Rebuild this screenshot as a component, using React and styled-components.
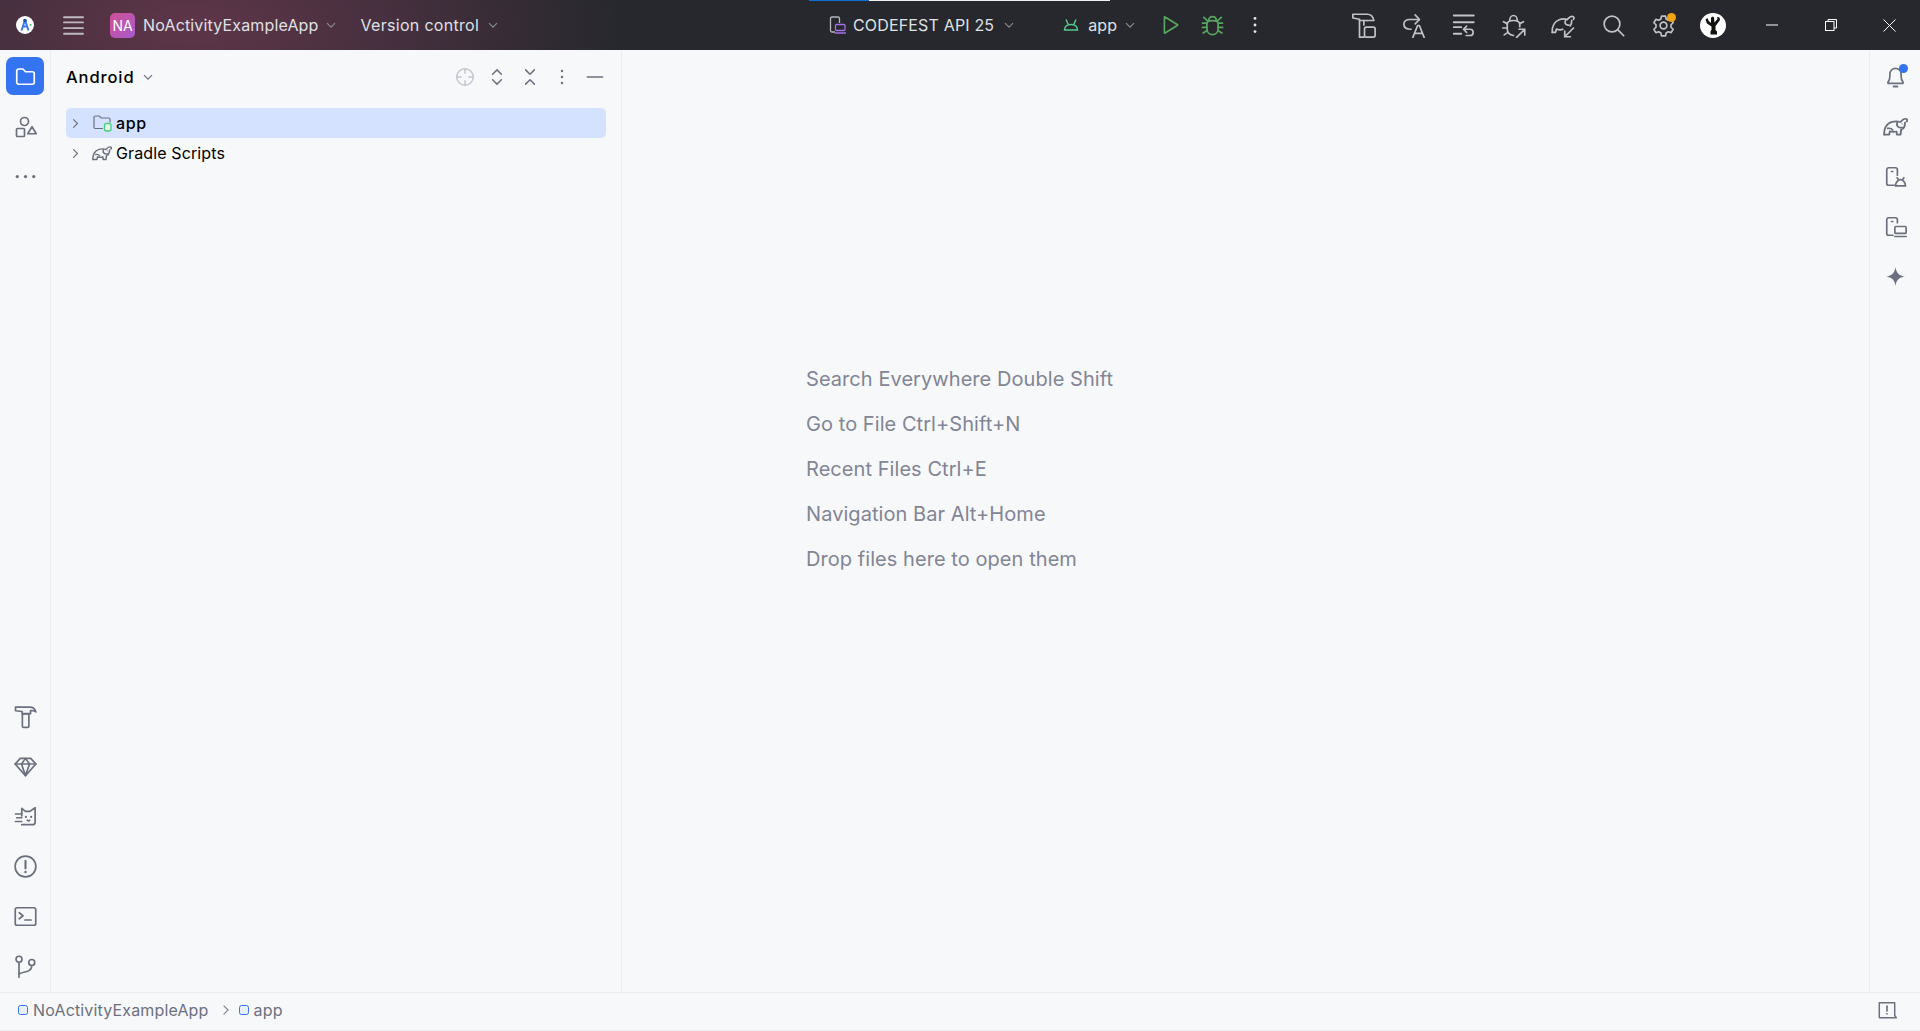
import React from "react";
import styled, { createGlobalStyle } from "styled-components";

const Global = createGlobalStyle`
  html, body { margin: 0; padding: 0; height: 100%; background: #f7f8fa; }
  body { font-family: "Inter", "Liberation Sans", sans-serif; }
  #root { height: 100%; }
`;

const Screen = styled.div`
  display: flex;
  flex-direction: column;
  width: 100%;
  height: 1031px;
  overflow: hidden;
  background: #f7f8fa;
  color: #000;
`;

const TitleBar = styled.header`
  position: relative;
  flex: 0 0 50px;
  display: flex;
  align-items: center;
  background:
    radial-gradient(ellipse 430px 190px at 190px 25px, #5f3549 0%, #47303f 45%, #27282e 100%);
`;

const Progress = styled.div`
  position: absolute;
  top: 0;
  left: 809px;
  width: 301px;
  height: 1px;
  background: linear-gradient(90deg, #0a6fd6 0 60px, #f0f0f0 60px);
`;

const TitleLeft = styled.div`
  flex: 0 0 829px;
  display: flex;
  align-items: center;
`;

const TitleSlot = styled.div`
  flex: 0 0 ${(p) => p.$w || 50}px;
  height: 50px;
  display: flex;
  align-items: center;
  justify-content: center;
`;

const ProjectBadge = styled.div`
  width: 25px;
  height: 25px;
  margin-left: 12px;
  margin-right: 8px;
  border-radius: 5px;
  background: linear-gradient(135deg, #d24f95, #a65bce);
  color: #fff;
  display: flex;
  align-items: center;
  justify-content: center;
  font-size: 14px;
`;

const TitleText = styled.span`
  color: #dfe1e5;
  font-size: 16px;
  letter-spacing: ${(p) => p.$ls ?? 0.16}px;
  line-height: 20px;
  white-space: nowrap;
  margin-left: ${(p) => p.$ml || 0}px;
`;

const Drop = styled.svg`
  flex: none;
  width: ${(p) => p.$s || 12}px;
  height: ${(p) => p.$s || 12}px;
  margin-left: ${(p) => p.$ml ?? 6}px;
  fill: none;
  stroke: ${(p) => p.$c || "#868a91"};
  stroke-width: 1.2;
`;

const VersionGroup = styled.div`
  display: flex;
  align-items: center;
  margin-left: 24px;
`;

const TitleCenter = styled.div`
  display: flex;
  align-items: center;
  flex: 0 0 509px;
`;

const RunTarget = styled.div`
  display: flex;
  align-items: center;
  margin-left: ${(p) => p.$ml || 0}px;
`;

const RightTools = styled.div`
  display: flex;
  align-items: center;
`;

const WindowControls = styled.div`
  display: flex;
  margin-left: 4px;
`;

const WinButton = styled.div`
  width: 59px;
  height: 50px;
  display: flex;
  align-items: center;
  justify-content: center;
`;

const Workspace = styled.div`
  flex: 1;
  display: flex;
  min-height: 0;
`;

const Stripe = styled.aside`
  flex: 0 0 50px;
  display: flex;
  flex-direction: column;
  justify-content: space-between;
  align-items: center;
  padding: 7px 0 0;
  box-sizing: content-box;
  border-${(p) => p.$side}: 1px solid #ebecf0;
`;

const StripeGroup = styled.div`
  display: flex;
  flex-direction: column;
  align-items: center;
`;

const StripeButton = styled.div`
  width: 38px;
  height: 38px;
  margin: 0 0 12px;
  border-radius: 7px;
  display: flex;
  align-items: center;
  justify-content: center;
  background: ${(p) => (p.$active ? "#3574f0" : "transparent")};
  &:last-child {
    margin-bottom: 7px;
  }
`;

const ToolPanel = styled.section`
  flex: 0 0 570px;
  display: flex;
  flex-direction: column;
  border-right: 1px solid #ebecf0;
  box-sizing: content-box;
`;

const PanelHeader = styled.div`
  height: 53px;
  display: flex;
  align-items: center;
  padding: 0 0 0 15px;
`;

const PanelTitle = styled.span`
  font-size: 16.5px;
  font-weight: 500;
  letter-spacing: 0.9px;
  color: #000;
`;

const PanelTools = styled.div`
  margin-left: auto;
  display: flex;
  margin-right: 10px;
`;

const PanelTool = styled.div`
  width: 32.5px;
  height: 30px;
  display: flex;
  align-items: center;
  justify-content: center;
`;

const Tree = styled.div`
  padding: 5px 15px 0 15px;
  display: flex;
  flex-direction: column;
`;

const TreeRow = styled.div`
  height: 30px;
  display: flex;
  align-items: center;
  padding-left: 3px;
  border-radius: 5px;
  background: ${(p) => (p.$selected ? "#d4e2ff" : "transparent")};
`;

const TreeGap = styled.span`
  flex: none;
  width: 10px;
`;

const TreeLabel = styled.span`
  font-size: 16px;
  margin-left: 4px;
  letter-spacing: ${(p) => (p.$selected ? 0.6 : 0.12)}px;
  font-weight: ${(p) => (p.$selected ? 500 : 400)};
  color: #000;
`;

const Editor = styled.main`
  flex: 1;
  display: flex;
  flex-direction: column;
  justify-content: flex-start;
  gap: 15px;
  padding: 314px 0 0 184px;
`;

const Hint = styled.div`
  font-size: 20px;
  letter-spacing: 0.06px;
  line-height: 30px;
  color: #818594;
`;

const StatusBar = styled.footer`
  flex: 0 0 39px;
  display: flex;
  align-items: center;
  padding: 0 18px 3px 18px;
  border-top: 1px solid #ebecf0;
  border-bottom: 1px solid #eceef1;
  box-sizing: border-box;
`;

const Crumb = styled.span`
  font-size: 16px;
  letter-spacing: 0.16px;
  color: #6c707e;
`;

const ModuleBox = styled.span`
  width: 10px;
  height: 10px;
  margin-left: ${(p) => p.$ml || 0}px;
  margin-right: 5px;
  box-sizing: border-box;
  border: 1.4px solid #3574f0;
  background: #e7effd;
  border-radius: 2.5px;
`;

const CrumbSep = styled.span`
  display: flex;
  margin-left: 10px;
`;

const StatusEnd = styled.div`
  margin-left: auto;
  display: flex;
  margin-right: 4px;
`;

const G = styled.svg`
  flex: none;
  display: block;
  width: ${(p) => p.$s || 25}px;
  height: ${(p) => p.$s || 25}px;
  fill: none;
  stroke: ${(p) => p.$c || "#6c707e"};
  stroke-width: ${(p) => p.$w || 1.35};
  stroke-linecap: round;
  stroke-linejoin: round;
`;

const I = ({ children, s, c, w }) => (
  <G viewBox="0 0 20 20" $s={s} $c={c} $w={w}>
    {children}
  </G>
);

const Chev = ({ c, ml, s }) => (
  <Drop viewBox="0 0 12 12" $c={c} $ml={ml} $s={s}>
    <path d="M2 4.2l4 4 4-4" />
  </Drop>
);

const Elephant = ({ eye = "#6c707e" }) => (
  <g transform="translate(-1.200 0) scale(1.120 1)">
    <path d="M2 16.500C1.500 12 3.500 7.500 7.500 6.300 10 5.600 12 5.800 13.300 6.500 14.500 5.800 15 3.800 17 3.800 18.400 3.800 18.800 5.200 18 6" />
    <path d="M11.300 6.500c-1 2.800.6 5 3.700 4.300" />
    <path d="M16.800 6.800c0 2.700-.8 5.200-2.800 5.700l-.4 4h-2.600l-.2-2.500c-1.800.5-3.300.5-4.800-.2l-.5 2.700H2" />
    <path d="M4.500 11.500c1.500-.3 2.700.2 3.500 1.300" />
    <circle cx="14.700" cy="7.800" r=".5" fill={eye} stroke="none" />
  </g>
);

const tools = {
  hammerBox: (
    <>
      <path d="M1.500 1h11.500c2.800 0 4.700 1.800 5.300 5h-5.500M1.500 1v3l5.300 1v14.300h3.500" />
      <path d="M10.300 6v3.500" />
      <path d="M6.800 6h6" />
      <rect x="10.800" y="11.300" width="8.500" height="8" rx="1.500" />
    </>
  ),
  redoA: (
    <>
      <path d="M11.300 1.500l3.500 3.700-3.500 3.500" />
      <path d="M14.500 5.200H7C4.300 5.200 2.300 6.500 2.300 9S4.500 13 8 13" />
      <path d="M9.500 19.500l3.800-9.500h1.400l3.800 9.500M11 16.300h6" />
    </>
  ),
  lines: (
    <>
      <path d="M2.200 2h16M2.200 7.400h16M2.200 11.300h6M2.200 16.600h6" strokeWidth="1.500" />
      <path d="M10.200 13h5a2.500 2.500 0 0 1 0 5h-3M12.500 10.500L10 13l2.500 2.500" />
    </>
  ),
  bugArrow: (
    <>
      <path d="M7 6C7 3.800 8.300 2 10 2s3 1.800 3 4" />
      <path d="M5 9c0-2 2-3 5-3s5 1 5 3v2" />
      <path d="M5 9v3.500C5 15.500 7 17.500 10 18" />
      <path d="M5 8.500L2 7M5 12H1.500M5.500 15.500l-3 2M15 8.500l3-1.500" />
      <path d="M12.500 19.500L19 13M14.500 13H19v4.500" />
    </>
  ),
  elephantArrows: (
    <>
      <path d="M1 15.500C.7 10.500 3 6.500 7 5.200 9.500 4.400 11.500 4.600 13 5.300 14 4.200 15 2.500 17 2.700 18.400 2.900 18.800 4.300 18 5" />
      <path d="M11.500 6c-.8 2.300.5 4 2.800 3.700" />
      <path d="M16.600 5.800c0 2-.3 3.500-1.300 4.600M1 15.500h2.500l.9-2.600c1.800.7 3.400.7 5 .2" />
      <path d="M11 19l7-7M11 14.500V19h4.500" />
    </>
  ),
  search: (
    <>
      <circle cx="8.800" cy="8.800" r="6.300" />
      <path d="M13.500 13.500l4.700 4.700" />
    </>
  ),
  gear: (
    <>
      <path d="M8.400 2.500h3.200l.5 2.300 1.700 1 2.300-.7 1.600 2.700-1.700 1.600v2l1.700 1.600-1.600 2.700-2.300-.7-1.700 1-.5 2.300H8.400l-.5-2.300-1.700-1-2.300.7-1.600-2.700 1.700-1.600v-2L2.300 7.800l1.600-2.700 2.300.7 1.700-1z" />
      <circle cx="10" cy="10" r="2.700" />
    </>
  ),
};

const leftTop = [
  {
    active: true,
    c: "#fff",
    g: (
      <path d="M3 5.500A1.500 1.500 0 0 1 4.500 4H8l2 2.200h5.500A1.500 1.500 0 0 1 17 7.700v7A1.500 1.500 0 0 1 15.500 16.200h-11A1.500 1.500 0 0 1 3 14.700z" />
    ),
  },
  {
    g: (
      <>
        <circle cx="9.200" cy="6" r="3.200" />
        <rect x="2.800" y="11.600" width="6.400" height="6.400" rx=".8" />
        <path d="M15.200 10.200l3.400 5.600h-6.800z" />
      </>
    ),
  },
  {
    g: (
      <g fill="#6c707e" stroke="none">
        <circle cx="3.400" cy="10" r="1.300" />
        <circle cx="10" cy="10" r="1.300" />
        <circle cx="16.600" cy="10" r="1.300" />
      </g>
    ),
  },
];

const leftBottom = [
  <>
    <path d="M2 2.500h11.500c2.300 0 4 1.200 4.800 3.800-1.400-.8-2.800-1.100-4.300-1.100v2.500H7.300V6L2 5.400z" />
    <path d="M7.500 8h5.200v9.700a1 1 0 0 1-1 1H8.500a1 1 0 0 1-1-1z" />
  </>,
  <>
    <path d="M5.800 3.500h8.400L18.300 8 10 17.300 1.700 8z" />
    <path d="M1.700 8h16.600M6.800 8L10 17.300 13.200 8M6.800 8l3.200-4.500L13.200 8" />
  </>,
  <>
    <path d="M7 9.500V3.500l3 2.400h3.500L17.700 3v11.500a2 2 0 0 1-2 2H7" />
    <path d="M2 8h5M3 11h4M2 14h5" />
    <g fill="#6c707e" stroke="none">
      <circle cx="10.300" cy="10.300" r=".9" />
      <circle cx="14.500" cy="10.300" r=".9" />
    </g>
    <path d="M11.400 13c.7.600 1.400.6 2 0" />
  </>,
  <>
    <circle cx="10" cy="10" r="8.300" />
    <path d="M10 5.500v6" strokeWidth="1.700" />
    <circle cx="10" cy="14.300" r="1" fill="#6c707e" stroke="none" />
  </>,
  <>
    <rect x="1.800" y="3" width="16.400" height="14" rx="1.500" />
    <path d="M5 7l3 2.400L5 11.800M9.500 12.800h5" />
  </>,
  <>
    <circle cx="4.800" cy="4.200" r="2.400" />
    <circle cx="15" cy="6.800" r="2.400" />
    <path d="M4.800 6.600v12M15 9.200c0 3-2 4.300-4 4.800-2.500.6-4.500 1-6.200 2" />
  </>,
];

const rightTools = [
  <>
    <path d="M4 14.500c1-1.200 1.500-2.500 1.500-4.500V8a4.500 4.500 0 0 1 9 0v2c0 2 .5 3.300 1.500 4.500.3.500 0 1-.5 1h-11c-.5 0-.8-.5-.5-1z" />
    <path d="M8.500 18h3" strokeWidth="1.600" />
  </>,
  <Elephant />,
  <>
    <path d="M9 17H4.500a1.500 1.500 0 0 1-1.500-1.500v-11A1.500 1.500 0 0 1 4.500 3H10a1.500 1.500 0 0 1 1.500 1.500V9" />
    <path d="M6.800 6h1" />
    <path d="M10 17.500c0-3 2.300-5 4-5s4 2 4 5zM11.300 11l1.300 1.800M16.700 11l-1.300 1.800" />
  </>,
  <>
    <path d="M8 17H4.500a1.500 1.500 0 0 1-1.500-1.500v-11A1.500 1.500 0 0 1 4.500 3H10a1.500 1.500 0 0 1 1.500 1.500V7" />
    <path d="M6.800 6h1" />
    <rect x="9.500" y="10" width="9" height="5.500" rx=".8" />
    <path d="M9.500 18h9" />
  </>,
  <path
    d="M10 2.500c.7 4.700 2.800 6.800 7.500 7.500-4.700.7-6.800 2.800-7.500 7.500-.7-4.700-2.800-6.800-7.500-7.500 4.700-.7 6.800-2.800 7.500-7.500z"
    fill="#6c707e"
    stroke="none"
  />,
];

const Dot = styled.span`
  position: absolute;
  width: ${(p) => p.$s}px;
  height: ${(p) => p.$s}px;
  border-radius: 50%;
  background: ${(p) => p.$c};
  top: ${(p) => p.$t}px;
  right: ${(p) => p.$r}px;
`;

const Badged = styled.span`
  position: relative;
  display: block;
  width: 25px;
  height: 25px;
`;

const hints = [
  "Search Everywhere Double Shift",
  "Go to File Ctrl+Shift+N",
  "Recent Files Ctrl+E",
  "Navigation Bar Alt+Home",
  "Drop files here to open them",
];

const TITLE_ICON = "#bfc2c8";

export default function App() {
  return (
    <Screen>
      <Global />
      <TitleBar>
        <Progress />
        <TitleLeft>
          <TitleSlot $w={49}>
            <svg width="18" height="18" viewBox="0 0 18 18">
              <circle cx="9" cy="9" r="9" fill="#fff" />
              <path d="M9 4L5.500 14.500M9 4l3.500 10.500M6.500 10.500h5" stroke="#3d7bea" strokeWidth="2" fill="none" />
              <circle cx="9" cy="4.500" r="1.800" fill="#1f4fa8" />
              <circle cx="14.500" cy="9" r="1" fill="#4fc06f" />
            </svg>
          </TitleSlot>
          <TitleSlot $w={49}>
            <I c="#bdbabf" s={25} w={1.5}>
              <path d="M2.400 3.400h15.200M2.400 7.500h15.200M2.400 12.100h15.200M2.400 16.600h15.200" />
            </I>
          </TitleSlot>
          <ProjectBadge>NA</ProjectBadge>
          <TitleText>NoActivityExampleApp</TitleText>
          <Chev />
          <VersionGroup>
            <TitleText $ls={0.3}>Version control</TitleText>
            <Chev ml={8} />
          </VersionGroup>
        </TitleLeft>
        <TitleCenter>
          <svg width="18" height="20" viewBox="0 0 18 20" fill="none">
            <path d="M6 17H3a1.500 1.500 0 0 1-1.500-1.500v-12A1.500 1.500 0 0 1 3 2h6a1.500 1.500 0 0 1 1.500 1.500V8" stroke="#b4b8bf" strokeWidth="1.300" />
            <rect x="6.500" y="9.500" width="9.500" height="6" rx="1" stroke="#a571e6" strokeWidth="1.300" />
            <path d="M5.500 18h11.500" stroke="#a571e6" strokeWidth="1.500" />
          </svg>
          <TitleText $ml={6}>CODEFEST API 25</TitleText>
          <Chev ml={9} />
          <RunTarget $ml={48}>
            <svg width="16" height="14" viewBox="0 0 16 14" fill="none">
              <path d="M1.500 12c0-3.500 2.800-5.500 6.500-5.500s6.500 2 6.500 5.500zM3 1.500l2.500 5.500M13 1.500L10.500 7" stroke="#57c98a" strokeWidth="1.500" />
            </svg>
            <TitleText $ml={9}>app</TitleText>
            <Chev ml={7} />
          </RunTarget>
          <RunTarget $ml={23}>
            <I c="#57a65e" s={24} w={1.4}>
              <path d="M4.500 3.500v13a.3.300 0 0 0 .5.200L15.500 10.200a.3.300 0 0 0 0-.4L5 3.300a.3.300 0 0 0-.5.200z" />
            </I>
          </RunTarget>
          <RunTarget $ml={17}>
            <I c="#57a65e" s={25} w={1.4}>
              <path d="M7 6c0-2 1.300-3.200 3-3.200S13 4 13 6M5.500 8.500C5.500 6.500 7.500 6 10 6s4.500.5 4.500 2.500v4c0 2.800-2 4.700-4.500 4.700s-4.500-1.900-4.500-4.700z" />
              <path d="M2 8h3.500M14.500 8H18M2 11.500h3.500M14.500 11.500H18M2.500 16l3.300-2M17.500 16l-3.300-2M3 3.500l3.300 3M17 3.500l-3.300 3" />
            </I>
          </RunTarget>
          <RunTarget $ml={18}>
            <I c="#e4e6ea" s={24}>
              <g fill="#e4e6ea" stroke="none">
                <circle cx="10" cy="4.500" r="1.200" />
                <circle cx="10" cy="10" r="1.200" />
                <circle cx="10" cy="15.500" r="1.200" />
              </g>
            </I>
          </RunTarget>
        </TitleCenter>
        <RightTools>
          <TitleSlot><I c={TITLE_ICON}>{tools.hammerBox}</I></TitleSlot>
          <TitleSlot><I c={TITLE_ICON}>{tools.redoA}</I></TitleSlot>
          <TitleSlot><I c={TITLE_ICON}>{tools.lines}</I></TitleSlot>
          <TitleSlot><I c={TITLE_ICON}>{tools.bugArrow}</I></TitleSlot>
          <TitleSlot><I c={TITLE_ICON}>{tools.elephantArrows}</I></TitleSlot>
          <TitleSlot><I c={TITLE_ICON}>{tools.search}</I></TitleSlot>
          <TitleSlot>
            <Badged>
              <I c={TITLE_ICON}>{tools.gear}</I>
              <Dot $s={9} $c="#f2a30f" $t={0} $r={0} />
            </Badged>
          </TitleSlot>
          <TitleSlot>
            <svg width="26" height="25" viewBox="0 0 26 25">
              <ellipse cx="13" cy="12.500" rx="13" ry="12.500" fill="#fff" />
              <path d="M10.500 21.500V18l1-1v-3.500L7 10.500 5.500 6.500l2-1.500 1.200 3 2.300 2V4.500l2-1 1 1 .5 5 3-3.500-.5-2 2.500.5.500 2.500-4.500 6V17l1.500 1.500v3z" fill="#111" />
            </svg>
          </TitleSlot>
          <WindowControls>
            <WinButton>
              <svg width="12" height="12" viewBox="0 0 12 12"><path d="M0 6h12" stroke="#fff" /></svg>
            </WinButton>
            <WinButton>
              <svg width="12" height="12" viewBox="0 0 12 12" fill="none">
                <rect x=".5" y="2.500" width="8.500" height="9" stroke="#fff" />
                <path d="M3 2.500V.5h8.500v8.500H9" stroke="#fff" />
              </svg>
            </WinButton>
            <WinButton>
              <svg width="13" height="13" viewBox="0 0 13 13"><path d="M.5.500l12 12M12.500.500l-12 12" stroke="#fff" /></svg>
            </WinButton>
          </WindowControls>
        </RightTools>
      </TitleBar>

      <Workspace>
        <Stripe $side="right">
          <StripeGroup>
            {leftTop.map((b, i) => (
              <StripeButton key={i} $active={b.active}>
                <I c={b.c}>{b.g}</I>
              </StripeButton>
            ))}
          </StripeGroup>
          <StripeGroup>
            {leftBottom.map((g, i) => (
              <StripeButton key={i}>
                <I>{g}</I>
              </StripeButton>
            ))}
          </StripeGroup>
        </Stripe>

        <ToolPanel>
          <PanelHeader>
            <PanelTitle>Android</PanelTitle>
            <Chev c="#6c707e" ml={7} />
            <PanelTools>
              <PanelTool>
                <I c="#c4c7cf" s={22}>
                  <circle cx="10" cy="10" r="7.500" />
                  <path d="M10 2.500v4M10 13.500v4M2.500 10h4M13.500 10h4" />
                </I>
              </PanelTool>
              <PanelTool>
                <I s={22}><path d="M6 7.500l4-4 4 4M6 12.500l4 4 4-4" /></I>
              </PanelTool>
              <PanelTool>
                <I s={22}><path d="M6 3.500l4 4 4-4M6 16.500l4-4 4 4" /></I>
              </PanelTool>
              <PanelTool>
                <I s={22}>
                  <g fill="#6c707e" stroke="none">
                    <circle cx="10" cy="4.500" r="1.100" />
                    <circle cx="10" cy="10" r="1.100" />
                    <circle cx="10" cy="15.500" r="1.100" />
                  </g>
                </I>
              </PanelTool>
              <PanelTool>
                <I s={22} w={1.3}><path d="M3 10h14" /></I>
              </PanelTool>
            </PanelTools>
          </PanelHeader>
          <Tree>
            <TreeRow $selected>
              <I s={13}><path d="M7 4l6 6-6 6" strokeWidth="1.700" /></I>
              <TreeGap />
              <svg width="20" height="20" viewBox="0 0 20 20" fill="none">
                <path d="M11 15.500H3.500A1.500 1.500 0 0 1 2 14V4.500A1.500 1.500 0 0 1 3.500 3h3.700l2 2h7.300A1.500 1.500 0 0 1 18 6.500v3" stroke="#6c707e" strokeWidth="1.200" />
                <rect x="12.500" y="10.500" width="6.500" height="7.500" rx="2" fill="#e4f5e9" stroke="#45cf7b" strokeWidth="1.300" />
              </svg>
              <TreeLabel $selected>app</TreeLabel>
            </TreeRow>
            <TreeRow>
              <I s={13}><path d="M7 4l6 6-6 6" strokeWidth="1.700" /></I>
              <TreeGap />
              <I s={20}><Elephant /></I>
              <TreeLabel>Gradle Scripts</TreeLabel>
            </TreeRow>
          </Tree>
        </ToolPanel>

        <Editor>
          {hints.map((h) => (
            <Hint key={h}>{h}</Hint>
          ))}
        </Editor>

        <Stripe $side="left">
          <StripeGroup>
            {rightTools.map((g, i) => (
              <StripeButton key={i}>
                {i === 0 ? (
                  <Badged>
                    <I>{g}</I>
                    <Dot $s={9} $c="#3574f0" $t={0} $r={0} />
                  </Badged>
                ) : (
                  <I>{g}</I>
                )}
              </StripeButton>
            ))}
          </StripeGroup>
        </Stripe>
      </Workspace>

      <StatusBar>
        <ModuleBox />
        <Crumb>NoActivityExampleApp</Crumb>
        <CrumbSep>
          <I s={14} c="#818594"><path d="M7 4l6 6-6 6" strokeWidth="1.600" /></I>
        </CrumbSep>
        <ModuleBox $ml={6} />
        <Crumb>app</Crumb>
        <StatusEnd>
          <I s={22}>
            <path d="M3 3.500h14v11.500l1.500 2H3.500a.5.5 0 0 1-.5-.5z" />
            <path d="M10 6.500v4.500" strokeWidth="1.500" />
            <circle cx="10" cy="13.500" r=".8" fill="#6c707e" stroke="none" />
          </I>
        </StatusEnd>
      </StatusBar>
    </Screen>
  );
}
